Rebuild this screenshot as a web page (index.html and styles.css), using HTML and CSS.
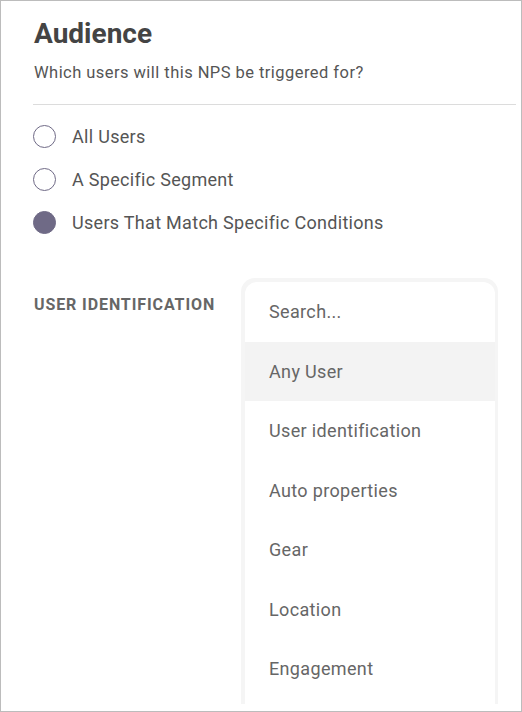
FILE: index.html
```html
<!DOCTYPE html>
<html>
<head>
<meta charset="utf-8">
<link rel="stylesheet" href="styles.css">
</head>
<body>
<div class="panel">
  <h1 class="title">Audience</h1>
  <p class="subtitle">Which users will this NPS be triggered for?</p>
  <hr class="divider">
  <ul class="radios">
    <li class="radio-row"><span class="radio"></span><span class="radio-label">All Users</span></li>
    <li class="radio-row"><span class="radio"></span><span class="radio-label">A Specific Segment</span></li>
    <li class="radio-row"><span class="radio checked"></span><span class="radio-label">Users That Match Specific Conditions</span></li>
  </ul>
  <div class="condition">
    <div class="cond-label">USER IDENTIFICATION</div>
    <div class="dropdown">
      <ul class="menu">
        <li class="menu-item search">Search...</li>
        <li class="menu-item active">Any User</li>
        <li class="menu-item">User identification</li>
        <li class="menu-item">Auto properties</li>
        <li class="menu-item">Gear</li>
        <li class="menu-item">Location</li>
        <li class="menu-item">Engagement</li>
      </ul>
    </div>
  </div>
</div>
</body>
</html>
```

FILE: styles.css
```css
* { box-sizing: border-box; }
html, body { margin: 0; padding: 0; background: #fff; }
body {
  font-family: Roboto, "Open Sans", sans-serif;
  color: #555;
}
.panel {
  width: 522px;
  height: 712px;
  border: 1px solid #bcbcbc;
  padding: 0 5px 0 32px;
  overflow: hidden;
}
.title {
  margin: 17px 0 0 1px;
  font-size: 28px;
  line-height: 32px;
  font-weight: 700;
  color: #444;
  letter-spacing: 0;
}
.subtitle {
  margin: 12px 0 0 1px;
  font-size: 16.5px;
  line-height: 22px;
  letter-spacing: 0.45px;
  color: #555;
}
.divider {
  margin: 20px 0 0 0;
  border: 0;
  border-top: 1px solid #dcdcdc;
  height: 0;
}
.radios {
  list-style: none;
  margin: 20px 0 0 0;
  padding: 0;
  display: flex;
  flex-direction: column;
  gap: 20px;
}
.radio-row {
  display: flex;
  align-items: center;
  gap: 16px;
  height: 23px;
}
.radio {
  width: 23px;
  height: 23px;
  border-radius: 50%;
  border: 1.5px solid #6f6a86;
  flex: none;
}
.radio.checked {
  background: #6f6a86;
}
.radio-label {
  font-size: 18px;
  letter-spacing: 0.3px;
  color: #555;
}
.condition {
  display: flex;
  margin-top: 44px;
}
.cond-label {
  width: 207px;
  padding-top: 17px;
  margin-left: 1px;
  font-size: 16px;
  letter-spacing: 0.9px;
  font-weight: 700;
  color: #666;
}
.dropdown {
  width: 257px;
  height: 426px;
  background: #f5f5f5;
  border-radius: 14px 14px 0 0;
  padding: 4px 3px 0 4px;
  overflow: hidden;
}
.menu {
  list-style: none;
  margin: 0;
  padding: 0;
  background: #fff;
  border-radius: 12px 12px 0 0;
  height: 100%;
}
.menu-item {
  height: 59.5px;
  display: flex;
  align-items: center;
  padding-left: 24px;
  font-size: 18px;
  letter-spacing: 0.35px;
  color: #666;
}
.menu-item.active {
  background: #f3f3f3;
}
```
